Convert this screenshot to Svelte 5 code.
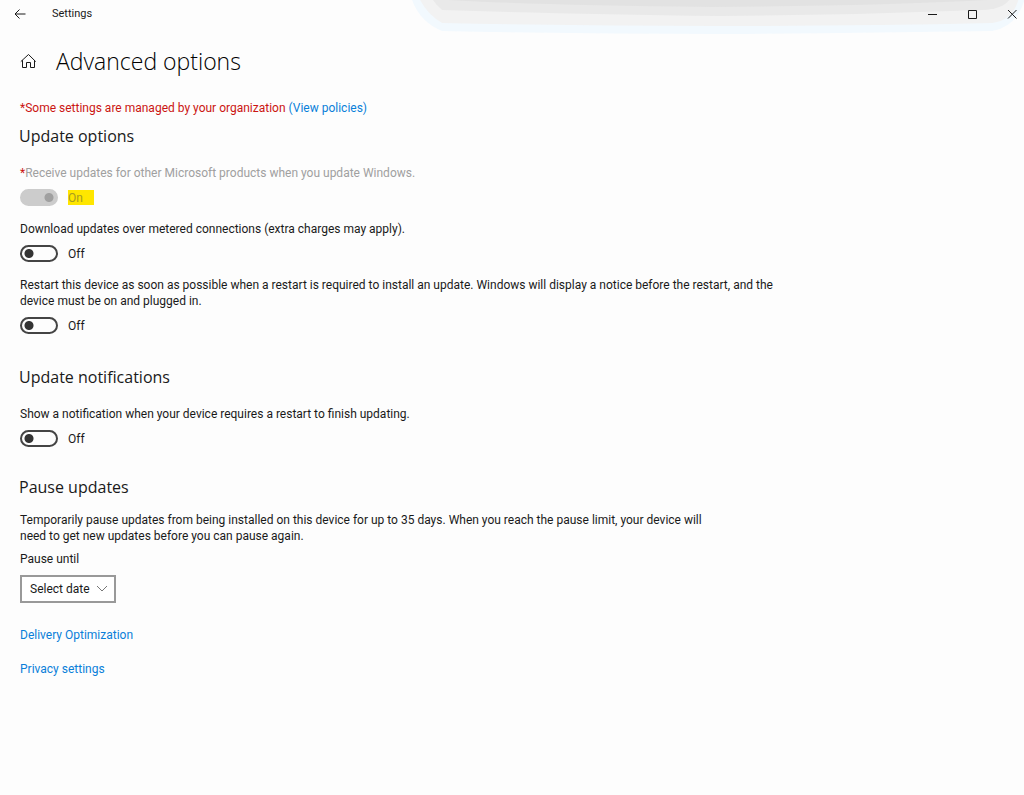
<script lang="ts">
type Toggle = {
    id: string;
    label: string;
    checked: boolean;
    managed?: boolean;
};

let updateOptions: Toggle[] = $state([
    {
        id: "other-products",
        label: "Receive updates for other Microsoft products when you update Windows.",
        checked: true,
        managed: true,
    },
    {
        id: "metered",
        label: "Download updates over metered connections (extra charges may apply).",
        checked: false,
    },
    {
        id: "restart-asap",
        label: "Restart this device as soon as possible when a restart is required to install an update. Windows will display a notice before the restart, and the device must be on and plugged in.",
        checked: false,
    },
]);

let notifications: Toggle[] = $state([
    {
        id: "notify",
        label: "Show a notification when your device requires a restart to finish updating.",
        checked: false,
    },
]);
</script>

{#snippet toggle(item: Toggle)}
    <div class="setting" class:managed={item.managed}>
        <label class="text" for={item.id}>
            {#if item.managed}<span class="star">*</span>{/if}{item.label}
        </label>
        <div class="switch-row">
            <input
                id={item.id}
                class="switch"
                type="checkbox"
                role="switch"
                bind:checked={item.checked}
                disabled={item.managed}
            />
            <span class="state">{item.checked ? "On" : "Off"}</span>
        </div>
    </div>
{/snippet}

<div class="window">
    <!-- soft shadow that falls over the title bar from above -->
    <svg class="shade" viewBox="0 0 612 34" preserveAspectRatio="none" aria-hidden="true">
        <path fill="#f2f9fe" d="M2 0Q10 22 32 31Q170 34 310 34Q450 33 580 31Q604 27 612 0z" />
        <path fill="#f2f2f2" d="M10 0Q18 15 32 23Q170 26 310 26Q450 26 580 23Q600 20 606 0z" />
        <path fill="#e9e9e9" d="M23 0Q26 5 32 10Q150 14 310 16Q440 15 570 10Q590 9 597 0z" />
        <path fill="#e2e2e2" d="M38 0Q120 5 300 7Q460 6 575 0z" />
    </svg>

    <header class="titlebar">
        <button class="back" aria-label="Back">
            <svg width="12" height="12" viewBox="0 0 12 12"><path d="M11.5 6H1M5.5 1.5 1 6l4.5 4.5" /></svg>
        </button>
        <span class="app-name">Settings</span>
        <div class="caption">
            <button aria-label="Minimize">
                <svg width="10" height="10" viewBox="0 0 10 10"><path d="M1 5.5h9" /></svg>
            </button>
            <button aria-label="Maximize">
                <svg width="10" height="10" viewBox="0 0 10 10"><path d="M1.5 1.5h8v8h-8z" /></svg>
            </button>
            <button aria-label="Close">
                <svg width="10" height="10" viewBox="0 0 10 10"><path d="m1 1 8.5 8.5M9.5 1 1 9.5" /></svg>
            </button>
        </div>
    </header>

    <main>
        <div class="page-title">
            <button class="home" aria-label="Home">
                <svg width="16" height="16" viewBox="0 0 16 16"><path d="M.8 8.6 8.5 1.5l7.2 7.1M2.5 7.2v7.3h4V9.5h4v5h4V7.2" /></svg>
            </button>
            <h1>Advanced options</h1>
        </div>

        <p class="policy">*Some settings are managed by your organization <a href="#policies">(View policies)</a></p>

        <section>
            <h2>Update options</h2>
            {#each updateOptions as item (item.id)}
                {@render toggle(item)}
            {/each}
        </section>

        <section>
            <h2>Update notifications</h2>
            {#each notifications as item (item.id)}
                {@render toggle(item)}
            {/each}
        </section>

        <section class="pause">
            <h2>Pause updates</h2>
            <p class="text">
                Temporarily pause updates from being installed on this device for up to 35 days. When you reach the pause limit, your device will need to get new updates before you can pause again.
            </p>
            <label class="text" for="pause-until">Pause until</label>
            <div class="select">
                <select id="pause-until">
                    <option>Select date</option>
                </select>
                <svg width="12" height="8" viewBox="0 0 12 8"><path d="m1 1 5 5 5-5" /></svg>
            </div>
        </section>

        <nav>
            <a href="#delivery">Delivery Optimization</a>
            <a href="#privacy">Privacy settings</a>
        </nav>
    </main>
</div>

<style>
:global(body) {
    margin: 0;
    background: #fdfdfd;
}

.window {
    position: relative;
    min-height: 100vh;
    color: #1a1a1a;
    font: 12px/16px Roboto, "Open Sans", sans-serif;
    overflow: hidden;
}

h1,
h2,
p {
    margin: 0;
    font-weight: 400;
}

h1,
h2 {
    font-family: "Open Sans", "Noto Sans", sans-serif;
}

button {
    display: flex;
    align-items: center;
    justify-content: center;
    padding: 0;
    border: 0;
    background: none;
}

button svg,
.select svg {
    fill: none;
    stroke: #1a1a1a;
}

.shade {
    position: absolute;
    top: 0;
    right: 0;
    width: 60%;
    height: 34px;
}

.titlebar {
    position: relative;
    display: flex;
    align-items: center;
    height: 27px;
}

.back {
    width: 40px;
    height: 26px;
}

.app-name {
    margin-left: 12px;
    font-size: 11px;
}

.caption {
    display: flex;
    gap: 16px;
    margin-left: auto;
}

.caption button {
    width: 24px;
    height: 26px;
}

main {
    padding: 14px 20px;
}

.page-title {
    display: flex;
    align-items: center;
    gap: 20px;
    height: 40px;
}

.home {
    width: 16px;
    height: 16px;
}

h1 {
    color: #000;
    font-size: 23px;
    font-weight: 300;
    line-height: 40px;
}

a {
    color: #0a7fd9;
    text-decoration: none;
}

.policy {
    margin-top: 19px;
    color: #cb1512;
}

h2 {
    margin: 8px 0 17px -1px;
    font-size: 16px;
    line-height: 24px;
}

section + section h2 {
    margin-top: 31px;
}

.text {
    display: block;
    max-width: 760px;
}

.setting {
    margin-bottom: 15px;
}

.star {
    color: #cb1512;
}

.managed .text {
    color: #a0a0a0;
}

.switch-row {
    display: flex;
    align-items: center;
    gap: 10px;
    margin-top: 8px;
}

.switch {
    appearance: none;
    box-sizing: border-box;
    width: 38px;
    height: 17px;
    margin: 0;
    border: 2px solid #444;
    border-radius: 9px;
    background: radial-gradient(circle at 7px 50%, #333 4px, transparent 5px);
}

.switch:checked {
    background: radial-gradient(circle at 27px 50%, #333 4px, transparent 5px);
}

.switch:disabled {
    border-color: #ccc;
    background: radial-gradient(circle at 27px 50%, #a0a0a0 4px, #ccc 5px);
}

.state {
    padding-top: 1px;
}

.managed .state {
    width: 26px;
    line-height: 14px;
    background: #ffe600;
    color: #a89c20;
}

section.pause h2 {
    margin-top: 28px;
    margin-bottom: 13px;
}

.pause p {
    max-width: 700px;
    margin-bottom: 7px;
}

.select {
    display: inline-grid;
    align-items: center;
    margin-top: 8px;
}

.select > * {
    grid-area: 1 / 1;
}

.select svg {
    justify-self: end;
    margin-right: 8px;
    stroke: #777;
    pointer-events: none;
}

select {
    appearance: none;
    width: 96px;
    height: 28px;
    padding: 0 8px;
    border: 2px solid #999;
    border-radius: 0;
    background: #fff;
    color: inherit;
    font: inherit;
}

nav {
    display: flex;
    flex-direction: column;
    align-items: flex-start;
    gap: 18px;
    margin-top: 24px;
}
</style>
